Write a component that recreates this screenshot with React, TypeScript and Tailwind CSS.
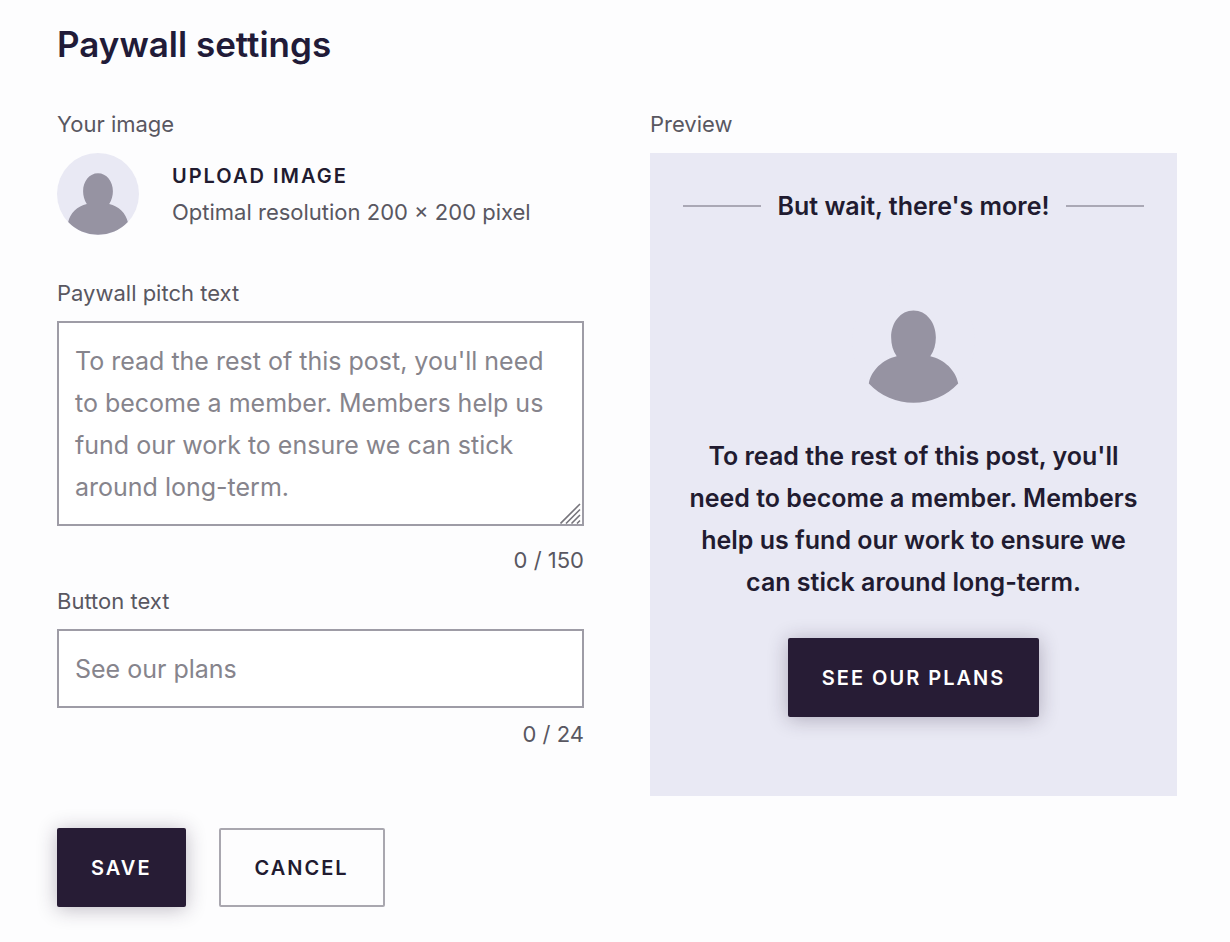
import { useState } from "react";
import type { ReactNode } from "react";

const DEFAULT_PITCH =
  "To read the rest of this post, you'll need to become a member. Members help us fund our work to ensure we can stick around long-term.";
const DEFAULT_BUTTON = "See our plans";
const PITCH_LIMIT = 150;
const BUTTON_LIMIT = 24;

function Avatar({ className }: { className: string }) {
  return (
    <svg viewBox="0 0 82 82" className={className} aria-hidden="true">
      <circle cx="41" cy="41" r="41" fill="#e9e9f4" />
      <path
        d="M29.8 50.9C27.3 47.2 26.1 42.8 26.1 38.3C26.1 28.3 32.4 20.3 41 20.3C49.6 20.3 55.9 28.3 55.9 38.3C55.9 42.8 54.7 47.2 52.2 50.9C61.5 53 69.2 60.3 70.8 69A41 41 0 0 1 11.2 69C12.8 60.3 20.5 53 29.8 50.9Z"
        fill="#9693a2"
      />
    </svg>
  );
}

interface ActionButtonProps {
  variant?: "solid" | "outline";
  children: ReactNode;
}

function ActionButton({ variant = "solid", children }: ActionButtonProps) {
  return (
    <button
      type="button"
      className={
        variant === "solid"
          ? "h-[79px] rounded-xs bg-[#271c35] px-[34px] text-xl font-semibold uppercase tracking-widest text-white shadow-[0_2px_20px_rgba(39,28,53,0.3)]"
          : "h-[79px] rounded-xs border-2 border-[#a9a7af] px-[34px] text-xl font-semibold uppercase tracking-widest text-[#211b30]"
      }
    >
      {children}
    </button>
  );
}

export default function App() {
  const [pitch, setPitch] = useState("");
  const [buttonText, setButtonText] = useState("");

  return (
    <main className="min-h-screen bg-[#fdfdfe] pt-5 pr-[53px] pb-8 pl-[57px] font-['Inter',sans-serif] text-[22px] leading-8 text-[#595761]">
      <h1 className="text-[35px] leading-12 font-semibold text-[#211b38]">Paywall settings</h1>

      <div className="mt-10 grid grid-cols-2 items-start gap-[66px]">
        <form id="paywall-form">
          {/* Image */}
          <p>Your image</p>
          <div className="mt-[13px] flex items-center gap-[33px]">
            <Avatar className="size-[82px]" />
            <div>
              <button
                type="button"
                className="block text-xl leading-9 font-semibold uppercase tracking-widest text-[#211b30]"
              >
                Upload image
              </button>
              <p className="leading-9">Optimal resolution 200 × 200 pixel</p>
            </div>
          </div>

          {/* Pitch */}
          <label htmlFor="pitch" className="mt-[42px] block">
            Paywall pitch text
          </label>
          <div className="relative mt-3">
            <textarea
              id="pitch"
              rows={4}
              maxLength={PITCH_LIMIT}
              value={pitch}
              onChange={(e) => setPitch(e.target.value)}
              placeholder={DEFAULT_PITCH}
              className="block w-full resize-none border-2 border-[#9e9ca6] bg-white px-4 pt-[17px] pb-4 text-[25px] leading-[42px] text-[#211b30] placeholder:text-[#86848c]"
            />
            <svg
              viewBox="0 0 22 22"
              className="pointer-events-none absolute right-0.5 bottom-0.5 size-[22px]"
              stroke="#77757c"
              strokeWidth="1.6"
              aria-hidden="true"
            >
              <path d="M0.5 21.5L20 2M6 21.5L20 7.5M11.5 21.5L20 13M17 21.5L20 18.5" />
            </svg>
          </div>
          <p className="mt-[18px] text-right">
            {pitch.length} / {PITCH_LIMIT}
          </p>

          {/* Button */}
          <label htmlFor="button-text" className="mt-[9px] block">
            Button text
          </label>
          <input
            id="button-text"
            type="text"
            maxLength={BUTTON_LIMIT}
            value={buttonText}
            onChange={(e) => setButtonText(e.target.value)}
            placeholder={DEFAULT_BUTTON}
            className="mt-3 block h-[79px] w-full border-2 border-[#9e9ca6] bg-white px-4 text-[25px] text-[#211b30] placeholder:text-[#86848c]"
          />
          <p className="mt-[10px] text-right">
            {buttonText.length} / {BUTTON_LIMIT}
          </p>
        </form>

        <section>
          <h2>Preview</h2>
          <div className="mt-[13px] flex flex-col items-center bg-[#e9e9f4] px-[33px] pt-8 pb-[79px] text-[25px] leading-[42px] font-semibold text-[#211b30]">
            <div className="flex w-full items-center gap-[17px]">
              <span className="h-0.5 flex-1 bg-[#aaa8b5]" />
              <h3>But wait, there's more!</h3>
              <span className="h-0.5 flex-1 bg-[#aaa8b5]" />
            </div>
            <Avatar className="mt-[53px] size-[123px]" />
            <p className="mt-8 mb-[35px] text-center">{pitch || DEFAULT_PITCH}</p>
            <ActionButton>{buttonText || DEFAULT_BUTTON}</ActionButton>
          </div>
        </section>
      </div>

      <div className="mt-8 flex gap-[33px]">
        <ActionButton>Save</ActionButton>
        <ActionButton variant="outline">Cancel</ActionButton>
      </div>
    </main>
  );
}
